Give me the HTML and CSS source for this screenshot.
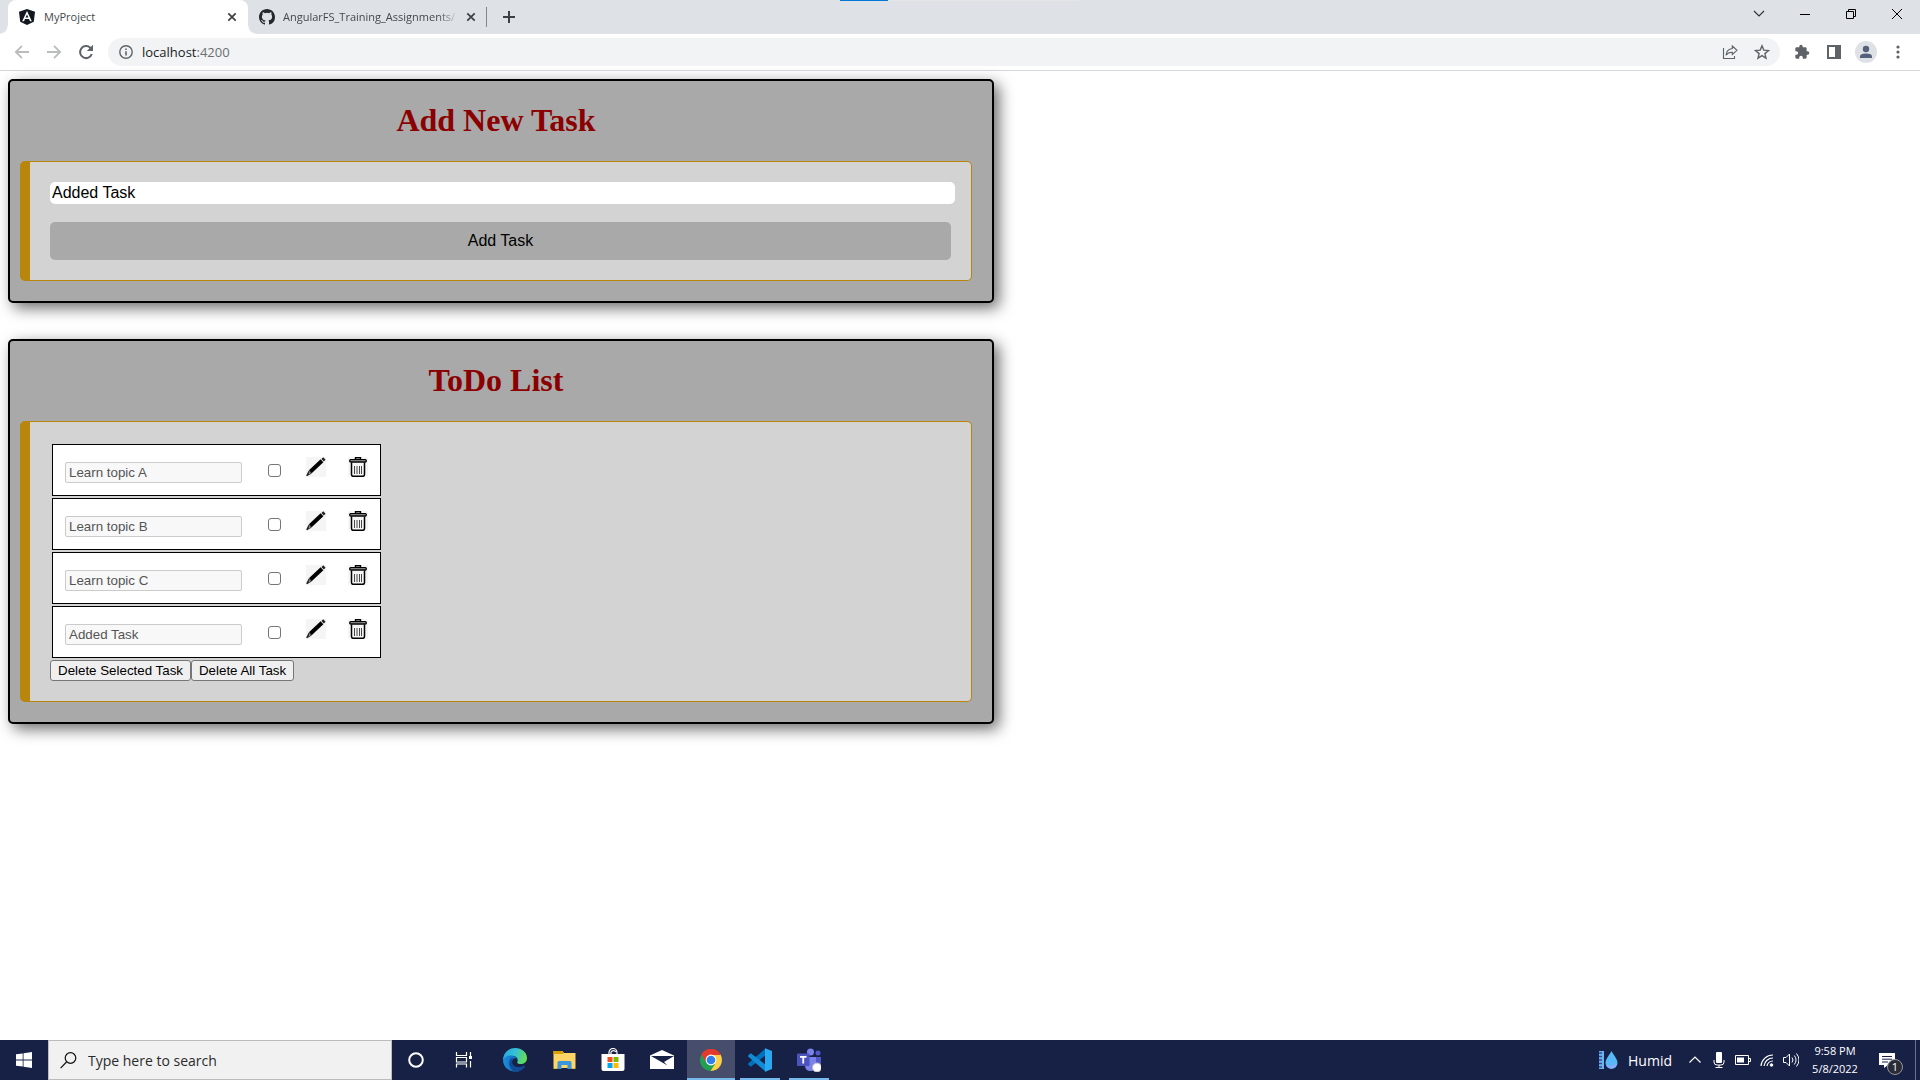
FILE: index.html
```html
<!DOCTYPE html>
<html lang="en">
<head>
<meta charset="utf-8">
<title>MyProject</title>
<link rel="stylesheet" href="styles.css">
</head>
<body>
<svg class="defs" aria-hidden="true">
  <symbol id="close" viewBox="0 0 10 10"><path d="M1.300 1.300l7.400 7.400M8.700 1.300L1.300 8.700" stroke="#3c4043" stroke-width="1.700"/></symbol>
  <symbol id="pencil" viewBox="0 0 20 20">
    <path d="M16 3.800L4.300 14.700" stroke="#000" stroke-width="4"/>
    <path d="M18.400 1.600l-1.800 1.700" stroke="#222" stroke-width="3.400"/>
    <path d="M2.700 13.500l3 3.100L1 19.300l-.8-.7z" fill="#222"/>
    <path d="M3 15l1.800 1.300L2.700 17.500z" fill="#999"/>
  </symbol>
  <symbol id="trash" viewBox="0 0 20 20" fill="none" stroke="#000">
    <path d="M7.500 2.500V.8h5v1.700" stroke-width="1.400"/>
    <rect x="1.700" y="2.700" width="16.600" height="2.300" rx="1" stroke-width="1.300" fill="#aaa"/>
    <path d="M3.500 5.500v12q0 1.800 1.800 1.800h9.400q1.800 0 1.800-1.800v-12" stroke-width="1.500"/>
    <path d="M6.500 9v8M9 9v8M11.500 9v8M13.500 9v8" stroke="#333" stroke-width=".9"/>
  </symbol>
</svg>

<header class="browser">
  <div class="tabstrip">
    <div class="tab tab-active">
      <svg class="favicon" viewBox="0 0 16 16"><path d="M8 0l8 2.700-1.200 10L8 16l-6.800-3.300L0 2.700z" fill="#13181f"/><path d="M8 2L3.200 12.300H5l1-2.400h4l1 2.400h1.800zM8 5.400l1.400 3.100H6.600z" fill="#fff" fill-rule="evenodd"/></svg>
      <span class="tab-title">MyProject</span>
      <button class="tab-close" aria-label="Close tab"><svg viewBox="0 0 10 10"><use href="#close"/></svg></button>
    </div>
    <div class="tab">
      <svg class="favicon" viewBox="0 0 16 16"><path fill="#24292f" d="M8 0C3.580 0 0 3.580 0 8c0 3.540 2.290 6.530 5.470 7.590.4.070.55-.17.55-.38 0-.19-.010-.82-.010-1.490-2.010.37-2.530-.49-2.690-.94-.090-.23-.48-.94-.82-1.130-.28-.15-.68-.52-.010-.53.63-.010 1.080.58 1.230.82.72 1.210 1.870.87 2.330.66.070-.52.28-.87.510-1.070-1.780-.2-3.640-.89-3.640-3.950 0-.87.310-1.590.82-2.150-.080-.2-.36-1.020.080-2.120 0 0 .67-.21 2.200.82a7.600 7.600 0 014 0c1.530-1.040 2.200-.82 2.200-.82.44 1.100.16 1.920.080 2.120.510.56.82 1.270.82 2.150 0 3.070-1.870 3.750-3.650 3.950.29.25.54.73.54 1.480 0 1.070-.010 1.930-.010 2.200 0 .21.150.46.550.38A8.010 8.010 0 0016 8c0-4.420-3.580-8-8-8z"/></svg>
      <span class="tab-title tab-title-cut">AngularFS_Training_Assignments/</span>
      <button class="tab-close" aria-label="Close tab"><svg viewBox="0 0 10 10"><use href="#close"/></svg></button>
    </div>
    <button class="new-tab" aria-label="New tab"><svg viewBox="0 0 12 12"><path d="M6 0v12M0 6h12" stroke="#3c4043" stroke-width="2"/></svg></button>
    <div class="window-controls">
      <button aria-label="Search tabs"><svg viewBox="0 0 12 12"><path d="M1 3l5 5 5-5" fill="none" stroke="#333" stroke-width="1.200"/></svg></button>
      <button aria-label="Minimize"><svg viewBox="0 0 12 12"><path d="M1 6.500h10" stroke="#000"/></svg></button>
      <button aria-label="Restore"><svg viewBox="0 0 12 12"><path d="M1.500 3.500h7v7h-7zM3.500 3V1.500h7v7H9" fill="none" stroke="#000"/></svg></button>
      <button aria-label="Close"><svg viewBox="0 0 12 12"><path d="M1 1l10 10M11 1L1 11" stroke="#000"/></svg></button>
    </div>
    <span class="drag-handle"></span>
  </div>
  <div class="toolbar">
    <button class="nav" aria-label="Back"><svg viewBox="0 0 16 16"><path d="M15 8H2M8 1.800L1.800 8 8 14.200" fill="none" stroke="#babcbe" stroke-width="1.800"/></svg></button>
    <button class="nav" aria-label="Forward"><svg viewBox="0 0 16 16"><path d="M1 8h13M8 1.800L14.200 8 8 14.200" fill="none" stroke="#babcbe" stroke-width="1.800"/></svg></button>
    <button class="nav" aria-label="Reload"><svg viewBox="0 0 16 16"><path d="M13.800 10A6 6 0 1 1 12.300 3.800L14 5.500" fill="none" stroke="#5f6368" stroke-width="2"/><path d="M15 .8v6.200H8.800z" fill="#5f6368"/></svg></button>
    <div class="omnibox">
      <svg class="site-info" viewBox="0 0 14 14"><circle cx="7" cy="7" r="6.200" fill="none" stroke="#5f6368" stroke-width="1.400"/><path d="M7 6.200v4.300M7 3.400v1.500" stroke="#5f6368" stroke-width="1.600"/></svg>
      <span class="url">localhost<span class="port">:4200</span></span>
      <button class="omni-button" aria-label="Share"><svg viewBox="0 0 16 16" fill="none" stroke="#5f6368" stroke-width="1.100"><path d="M1.500 4v10.500h11V12M10.300 2l4.700 4.300-4.700 4.200V8.300C7.500 8.200 5.500 9 4 11.300 4.300 7.500 6.500 5 10.300 4.500z"/></svg></button>
      <button class="omni-button" aria-label="Bookmark"><svg viewBox="0 0 16 16"><path d="M8 1.800l1.800 4.300 4.700.4-3.600 3.100 1.100 4.600-4-2.500-4 2.500 1.100-4.600-3.600-3.100 4.700-.4z" fill="none" stroke="#5f6368" stroke-width="1.400"/></svg></button>
    </div>
    <div class="toolbar-actions">
      <button aria-label="Extensions"><svg viewBox="0 0 24 24"><path fill="#5f6368" d="M20.500 11H19V7c0-1.100-.9-2-2-2h-4V3.500a2.500 2.500 0 0 0-5 0V5H4c-1.100 0-2 .9-2 2v3.800h1.500a2.700 2.700 0 0 1 0 5.400H2V20c0 1.100.9 2 2 2h3.800v-1.500a2.700 2.700 0 0 1 5.400 0V22H17c1.100 0 2-.9 2-2v-4h1.500a2.500 2.500 0 0 0 0-5z"/></svg></button>
      <button aria-label="Side panel"><svg viewBox="0 0 16 16"><path d="M1 1h14v14H1zM3 3v10h6V3z" fill="#5f6368" fill-rule="evenodd"/></svg></button>
      <button class="profile" aria-label="Profile"><svg viewBox="0 0 14 14"><circle cx="7" cy="4" r="3.200" fill="#55607a"/><path d="M1 13v-1.500Q1 8.500 7 8.500t6 3V13z" fill="#55607a"/></svg></button>
      <button aria-label="Menu"><svg viewBox="0 0 16 16" fill="#5f6368"><circle cx="8" cy="3" r="1.600"/><circle cx="8" cy="8" r="1.600"/><circle cx="8" cy="13" r="1.600"/></svg></button>
    </div>
  </div>
</header>

<main class="page">
  <section class="card">
    <h1>Add New Task</h1>
    <form class="panel">
      <input class="new-task" type="text" value="Added Task" aria-label="New task">
      <button class="add-task" type="button">Add Task</button>
    </form>
  </section>

  <section class="card">
    <h1>ToDo List</h1>
    <div class="panel">
      <ul class="tasks">
        <li>
          <input class="task-name" type="text" value="Learn topic A" aria-label="Task 1" disabled>
          <input class="task-check" type="checkbox" aria-label="Select task 1">
          <button class="task-icon" aria-label="Edit task 1"><svg><use href="#pencil"/></svg></button>
          <button class="task-icon" aria-label="Delete task 1"><svg><use href="#trash"/></svg></button>
        </li>
        <li>
          <input class="task-name" type="text" value="Learn topic B" aria-label="Task 2" disabled>
          <input class="task-check" type="checkbox" aria-label="Select task 2">
          <button class="task-icon" aria-label="Edit task 2"><svg><use href="#pencil"/></svg></button>
          <button class="task-icon" aria-label="Delete task 2"><svg><use href="#trash"/></svg></button>
        </li>
        <li>
          <input class="task-name" type="text" value="Learn topic C" aria-label="Task 3" disabled>
          <input class="task-check" type="checkbox" aria-label="Select task 3">
          <button class="task-icon" aria-label="Edit task 3"><svg><use href="#pencil"/></svg></button>
          <button class="task-icon" aria-label="Delete task 3"><svg><use href="#trash"/></svg></button>
        </li>
        <li>
          <input class="task-name" type="text" value="Added Task" aria-label="Task 4" disabled>
          <input class="task-check" type="checkbox" aria-label="Select task 4">
          <button class="task-icon" aria-label="Edit task 4"><svg><use href="#pencil"/></svg></button>
          <button class="task-icon" aria-label="Delete task 4"><svg><use href="#trash"/></svg></button>
        </li>
      </ul>
      <div class="bulk">
        <button type="button">Delete Selected Task</button>
        <button type="button">Delete All Task</button>
      </div>
    </div>
  </section>
</main>

<footer class="taskbar">
  <button class="start" aria-label="Start"><svg viewBox="0 0 16 16" fill="#fff"><path d="M0 2.300l6.700-.9v6.200H0zM7.500 1.200L16 0v7.600H7.500zM0 8.400h6.700v6.200L0 13.700zM7.500 8.400H16V16l-8.500-1.200z"/></svg></button>
  <label class="search">
    <svg viewBox="0 0 17 17" fill="none" stroke="#111" stroke-width="1.200"><circle cx="10.500" cy="6" r="5.300"/><path d="M6.500 10L.6 16.200"/></svg>
    <input type="text" placeholder="Type here to search" aria-label="Search">
  </label>
  <div class="system-apps">
    <button aria-label="Cortana"><svg viewBox="0 0 24 24"><circle cx="12" cy="12" r="6.800" fill="none" stroke="#fff" stroke-width="2"/></svg></button>
    <button aria-label="Task view"><svg viewBox="0 0 24 24" fill="none" stroke="#fff" stroke-width="1.200"><path d="M4.500 4v3.500h10V4M4.500 19.500V16h10v3.500M4.500 9.500h10v4.500h-10zM18.500 4v4M18.500 13v6.500"/><path d="M17 8h3v3h-3z" fill="#fff" stroke="none"/></svg></button>
  </div>
  <div class="apps">
    <button aria-label="Edge"><svg viewBox="0 0 24 24">
      <defs>
        <linearGradient id="edge-top" x1="0" x2="1" y1=".3" y2=".5"><stop offset="0" stop-color="#2aa7df"/><stop offset=".5" stop-color="#35c1d5"/><stop offset="1" stop-color="#66e04d"/></linearGradient>
        <linearGradient id="edge-low" x1="0" x2="1"><stop offset="0" stop-color="#1a8fe0"/><stop offset="1" stop-color="#0f4f9d"/></linearGradient>
      </defs>
      <path d="M0 12A12 12 0 0 1 12 0c7 0 12 4.500 12 10 0 4-3 6-6.500 6-2.500 0-3.700-1-3.200-2 1-2 .3-6-4.800-6C5 8 .5 10 0 13z" fill="url(#edge-top)"/>
      <path d="M0 13c.8-4 4.800-5.600 8.500-5.500 3 .1 5 1.500 5.600 3.300C12 9.500 9 11 9 14.500c0 4.500 5.500 7 13 3.500A12 12 0 0 1 0 13z" fill="url(#edge-low)"/>
      <path d="M8 10.500C4.500 14 6 21.500 12.500 24c4.500 0 7.700-2.700 9.500-5.500.4-.7-.1-1-.7-.7C15 20.500 9.500 18.500 9 14.500c-.1-2 .6-3 1.500-4z" fill="#124b95"/>
    </svg></button>
    <button aria-label="File Explorer"><svg viewBox="0 0 24 24"><path d="M1.500 3h9l1.500 2h11.500v15h-22z" fill="#ffd567"/><path d="M1.500 3h9l1 3h-10z" fill="#dca100"/><path d="M5.500 21v-6.500q0-1.500 1.500-1.500h11q1.500 0 1.500 1.500V21h-4v-4h-6v4z" fill="#3b96dc"/><path d="M1.500 20h4v1h-4zM19.500 20h4v1h-4z" fill="#e7b840"/></svg></button>
    <button aria-label="Microsoft Store"><svg viewBox="0 0 24 24"><path d="M8 6V4.500a4 4 0 0 1 8 0V6M10 6V4a3 3 0 0 1 5 0" fill="none" stroke="#fff" stroke-width="1.200"/><path d="M.5 6h23v15q0 2-2 2h-19q-2 0-2-2z" fill="#fff"/><path d="M6.500 9h5v5h-5z" fill="#f25022"/><path d="M12.500 9h5v5h-5z" fill="#7fba00"/><path d="M6.500 15h5v5h-5z" fill="#00a4ef"/><path d="M12.500 15h5v5h-5z" fill="#ffb900"/></svg></button>
    <button aria-label="Mail"><svg viewBox="0 0 24 24"><path d="M0 7.500L12 2l12 5.500V21H0z" fill="#fff"/><path d="M1 8h23L14 14l3.500 3.500z" fill="#172045"/></svg></button>
    <button class="running focused" aria-label="Chrome"><svg viewBox="0 0 24 24"><path d="M12 12L2.500 6.500A11 11 0 0 1 21.600 6.500z" fill="#e23b2e"/><path d="M12 12l9.500-5.500A11 11 0 0 1 12 23l-1-1z" fill="#fdd045"/><path d="M12 12l4 4-4.500 7A11 11 0 0 1 2.500 6.500z" fill="#1fa052"/><path d="M12 6.500h9.600l-3 5.500h-4z" fill="#fdd045"/><path d="M12 1a11 11 0 0 0-9.500 5.500l4.700 8L12 7h9.800A11 11 0 0 0 12 1z" fill="#e23b2e"/><circle cx="12" cy="12" r="5.400" fill="#fff"/><circle cx="12" cy="12" r="4.300" fill="#2d80ee"/></svg></button>
    <button class="running" aria-label="Visual Studio Code"><svg viewBox="0 0 24 24"><path d="M18 0v7L3.500 18.200c-.5.4-1 .3-1.400 0L.4 16.700c-.5-.5-.5-1 0-1.500z" fill="#0072bb"/><path d="M18 24v-7L3.500 5.800c-.5-.4-1-.3-1.400 0L.4 7.300c-.5.500-.5 1 0 1.500z" fill="#128bd6"/><path d="M17 .2L24 3v18l-7 2.800z" fill="#29a9f2"/></svg></button>
    <button class="running" aria-label="Teams"><svg viewBox="0 0 24 24"><circle cx="13.500" cy="4" r="3.500" fill="#7b83eb"/><circle cx="21" cy="5" r="2.500" fill="#5059c9"/><path d="M17 9h7v6q0 4-4 4h-3z" fill="#5059c9"/><path d="M8 9h11v8q0 6-5.500 6T8 17z" fill="#7b83eb"/><rect x="0" y="5.500" width="12.500" height="12.500" rx="1" fill="#4b53bc"/><path d="M3 8.800h6.500M6.250 8.800v6.700" stroke="#fff" stroke-width="1.800"/><circle cx="20" cy="19.500" r="4.500" fill="#fff" stroke="#bbb"/></svg></button>
  </div>
  <div class="tray">
    <button class="weather"><svg viewBox="0 0 20 20"><path d="M1 1h5v18H1z" fill="#65b8ee"/><path d="M1 3h3M1 6.500h3M1 10h3M1 13.500h3M1 17h3" stroke="#414399" stroke-width="1.400"/><path d="M13.500 1C16 5.500 19.500 9 19.500 13a6 6 0 0 1-12 0c0-4 3.500-7.500 6-12z" fill="#58b8f5"/><path d="M8 15q5 2 11-1a6 6 0 0 1-11 1z" fill="#8fa8fa"/></svg>Humid</button>
    <div class="tray-icons">
      <button aria-label="Hidden icons"><svg viewBox="0 0 16 16"><path d="M2.500 10.500L8 5l5.500 5.500" fill="none" stroke="#fff" stroke-width="1.200"/></svg></button>
      <button aria-label="Microphone"><svg viewBox="0 0 16 16"><rect x="5" y="0" width="6" height="11" rx="1" fill="#fff"/><path d="M3 8v2q0 3 3 3h4q3 0 3-3V8M8 13v2.500M4.500 15.500h7" fill="none" stroke="#fff"/></svg></button>
      <button aria-label="Battery"><svg viewBox="0 0 16 16"><path d="M.5 3.500h13v9H.5zM13.500 6.500h2v3h-2" fill="none" stroke="#fff"/><path d="M2 5.500h7v5H2z" fill="#fff"/></svg></button>
      <button aria-label="Network"><svg viewBox="0 0 16 16" fill="none" stroke="#fff"><path d="M2 14A12 12 0 0 1 14 3M5 14a9 9 0 0 1 9-8M8 14a6 6 0 0 1 6-5" stroke-width="1.200"/><circle cx="12.500" cy="13" r="1.300" fill="#fff"/></svg></button>
      <button aria-label="Volume"><svg viewBox="0 0 16 16" fill="none" stroke="#fff"><path d="M.5 5.500H3L6.500 2v12L3 10.500H.5zM9 5.500q2 2.500 0 5M11.300 3.500q3.500 4.500 0 9M13.500 1.500q5 6.500 0 13"/></svg></button>
    </div>
    <time class="clock"><span>9:58 PM</span><span>5/8/2022</span></time>
    <button class="notifications" aria-label="Notifications"><svg viewBox="0 0 16 16"><path d="M0 1h16v12H9l-4 3v-3H0z" fill="#fff"/><path d="M3 4.500h10M3 7.200h10M3 10h6" stroke="#172045"/></svg><span class="badge">1</span></button>
  </div>
</footer>
</body>
</html>
```
FILE: styles.css
```css
* { box-sizing: border-box; }

body {
  display: flex;
  flex-direction: column;
  min-height: 100vh;
  margin: 0;
  background: #fff;
  font-family: "Liberation Serif", serif;
}

button { font-family: inherit; }
svg { display: block; }
.defs { position: absolute; width: 0; height: 0; }

.browser button,
.taskbar button {
  display: flex;
  align-items: center;
  justify-content: center;
  padding: 0;
  border: 0;
  background: none;
}

/* Browser chrome */
.browser {
  border-bottom: 1px solid #d5d7da;
  font-family: "Open Sans", sans-serif;
}

.tabstrip {
  position: relative;
  display: flex;
  height: 34px;
  padding-left: 8px;
  background: #dee1e6;
}

.drag-handle {
  position: absolute;
  top: 0;
  left: calc(50% - 120px);
  width: 240px;
  height: 1px;
  background: linear-gradient(to right, #0078d7 20%, #e6e6e6 20%);
}

.tab {
  display: flex;
  align-items: center;
  width: 240px;
  padding: 0 8px 0 11px;
}

.tab-active {
  position: relative;
  background: #fff;
  border-radius: 8px 8px 0 0;
}

.tab-active::before,
.tab-active::after {
  content: "";
  position: absolute;
  bottom: 0;
  width: 8px;
  height: 8px;
}
.tab-active::before { right: 100%; background: radial-gradient(circle at 0 0, #dee1e6 7px, #fff 8px); }
.tab-active::after { left: 100%; background: radial-gradient(circle at 100% 0, #dee1e6 7px, #fff 8px); }

.favicon { flex: none; width: 16px; height: 16px; margin-right: 8px; }
.tab-active .favicon { margin-right: 9px; }

.tab-title {
  flex: 1;
  overflow: hidden;
  color: #45494d;
  font-size: 11px;
  line-height: 16px;
  white-space: nowrap;
}

.tab-title-cut { mask-image: linear-gradient(to right, #000 88%, transparent); }

.tab-close { width: 16px; height: 16px; margin-left: 4px; }
.tab-close svg { width: 10px; height: 10px; }

.tab:nth-child(2) { width: 231px; padding-right: 0; }

.new-tab {
  width: 45px;
  height: 20px;
  margin: 7px 0;
}
.tabstrip .new-tab { border-left: 1px solid #80868b; margin-left: 7px; }
.new-tab svg { width: 12px; height: 12px; }

.window-controls { display: flex; margin-left: auto; }
.window-controls button { width: 46px; height: 28px; }
.window-controls svg { width: 12px; height: 12px; }

.toolbar {
  display: flex;
  align-items: center;
  height: 36px;
  padding: 0 6px;
}
.nav { width: 32px; height: 28px; }
.nav svg { width: 16px; height: 16px; }

.omnibox {
  display: flex;
  flex: 1;
  align-items: center;
  height: 28px;
  margin-left: 6px;
  padding: 0 2px 0 11px;
  border-radius: 14px;
  background: #f1f3f4;
}
.site-info { width: 14px; height: 14px; }
.url { flex: 1; margin-left: 9px; color: #202124; font-size: 13px; }
.port { color: #6b6f73; }
.omni-button { width: 32px; height: 28px; }
.omni-button svg { width: 16px; height: 16px; }

.toolbar-actions { display: flex; align-items: center; margin-left: 6px; }
.toolbar-actions button { width: 32px; height: 28px; }
.toolbar-actions svg { width: 16px; height: 16px; }
.toolbar-actions .profile {
  width: 22px;
  height: 22px;
  margin: 0 5px;
  border-radius: 50%;
  background: #dee1e6;
}
.profile svg { width: 14px; height: 14px; }

/* Page */
.page {
  display: flex;
  flex: 1;
  flex-direction: column;
  gap: 36px;
  padding: 8px;
}

.card {
  box-sizing: content-box;
  width: 50%;
  padding: 0 20px 20px 10px;
  border: 2px solid #000;
  border-radius: 5px;
  background: darkgray;
  box-shadow: 5px 5px 15px #6c6c6c;
}

.card h1 {
  margin: 0;
  padding: 20px 0 22px;
  color: darkred;
  font-size: 32px;
  line-height: 38px;
  text-align: center;
}

.panel {
  padding: 20px;
  border: 1px solid darkgoldenrod;
  border-left-width: 10px;
  border-radius: 5px;
  background: lightgray;
  font-family: "Liberation Sans", sans-serif;
}

.new-task {
  display: block;
  width: calc(100% + 4px);
  height: 22px;
  margin-bottom: 18px;
  padding: 2px;
  border: 0;
  border-radius: 5px;
  background: #fff;
  color: #000;
  font: 16px "Liberation Sans", sans-serif;
}

.add-task {
  display: block;
  width: 100%;
  height: 38px;
  padding: 0;
  border: 0;
  border-radius: 5px;
  background: darkgray;
  color: #000;
  font-size: 16px;
}

.tasks {
  display: grid;
  justify-content: start;
  gap: 2px;
  margin: 0;
  padding: 2px;
  list-style: none;
}

.tasks li {
  display: flex;
  align-items: flex-start;
  height: 52px;
  padding: 12px;
  border: 1px solid #000;
  background: #fff;
}

.task-name {
  width: 177px;
  height: 21px;
  margin: 5px 26px 0 0;
  padding: 1px 3px;
  border: 1px solid #cbcbcb;
  border-radius: 2px;
  background: #f8f8f8;
  color: #545454;
  font-family: "Liberation Sans", sans-serif;
}

.task-check {
  appearance: none;
  width: 13px;
  height: 13px;
  margin: 7px 25px 0 0;
  border: 1px solid #767676;
  border-radius: 3px;
  background: #fff;
}
.task-check:checked { border-color: #0075ff; background: #0075ff; }

.task-icon {
  width: 20px;
  height: 20px;
  padding: 0;
  border: 0;
  background: #f5f5f5;
}
.task-icon + .task-icon { margin-left: 22px; }
.task-icon svg { width: 20px; height: 20px; }

.bulk { display: flex; }
.bulk button {
  height: 21px;
  padding: 0 7px;
  border: 1px solid #767676;
  border-radius: 3px;
  background: #efefef;
  color: #000;
}

/* Taskbar */
.taskbar {
  display: flex;
  height: 40px;
  background: #172045;
  color: #fff;
  font-family: "Open Sans", sans-serif;
}

.taskbar button { height: 40px; color: #fff; }
.start { width: 48px; }
.start svg { width: 16px; height: 16px; }

.search {
  display: flex;
  align-items: center;
  width: 344px;
  padding-left: 11px;
  border: 1px solid #bcbcbc;
  background: #f1f1f1;
}
.search svg { width: 17px; height: 17px; }
.search input {
  flex: 1;
  min-width: 0;
  margin-left: 11px;
  padding: 0;
  border: 0;
  background: none;
  font: 14px "Open Sans", sans-serif;
}
.search input::placeholder { color: #2b2b2b; }

.system-apps { display: flex; }
.system-apps button { width: 48px; }
.system-apps svg,
.apps svg { width: 24px; height: 24px; }

.apps { display: flex; gap: 1px; margin-left: 3px; }
.apps button { width: 48px; }
.apps .running { background: linear-gradient(#76b9ed, #76b9ed) center bottom / 40px 2px no-repeat; }
.apps .focused { background-color: #464e6b; background-size: 48px 2px; }

.tray { display: flex; align-items: center; margin-left: auto; }
.weather { gap: 10px; font-size: 14px; }
.weather svg { width: 20px; height: 20px; }
.tray-icons { display: flex; margin-left: 11px; }
.tray-icons button { width: 24px; }
.tray-icons svg { width: 16px; height: 16px; }

.clock {
  display: flex;
  flex-direction: column;
  width: 64px;
  font-size: 11px;
  line-height: 18px;
  text-align: center;
}

.taskbar .notifications {
  position: relative;
  width: 49px;
  border-right: 1px solid #6c728b;
  padding-right: 8px;
  margin-right: 4px;
}
.notifications svg { width: 16px; height: 16px; }
.badge {
  position: absolute;
  top: 19px;
  right: 12px;
  width: 16px;
  height: 16px;
  border: 1px solid #96979b;
  border-radius: 50%;
  background: #292c36;
  font-size: 11px;
  line-height: 14px;
  text-align: center;
}
```
